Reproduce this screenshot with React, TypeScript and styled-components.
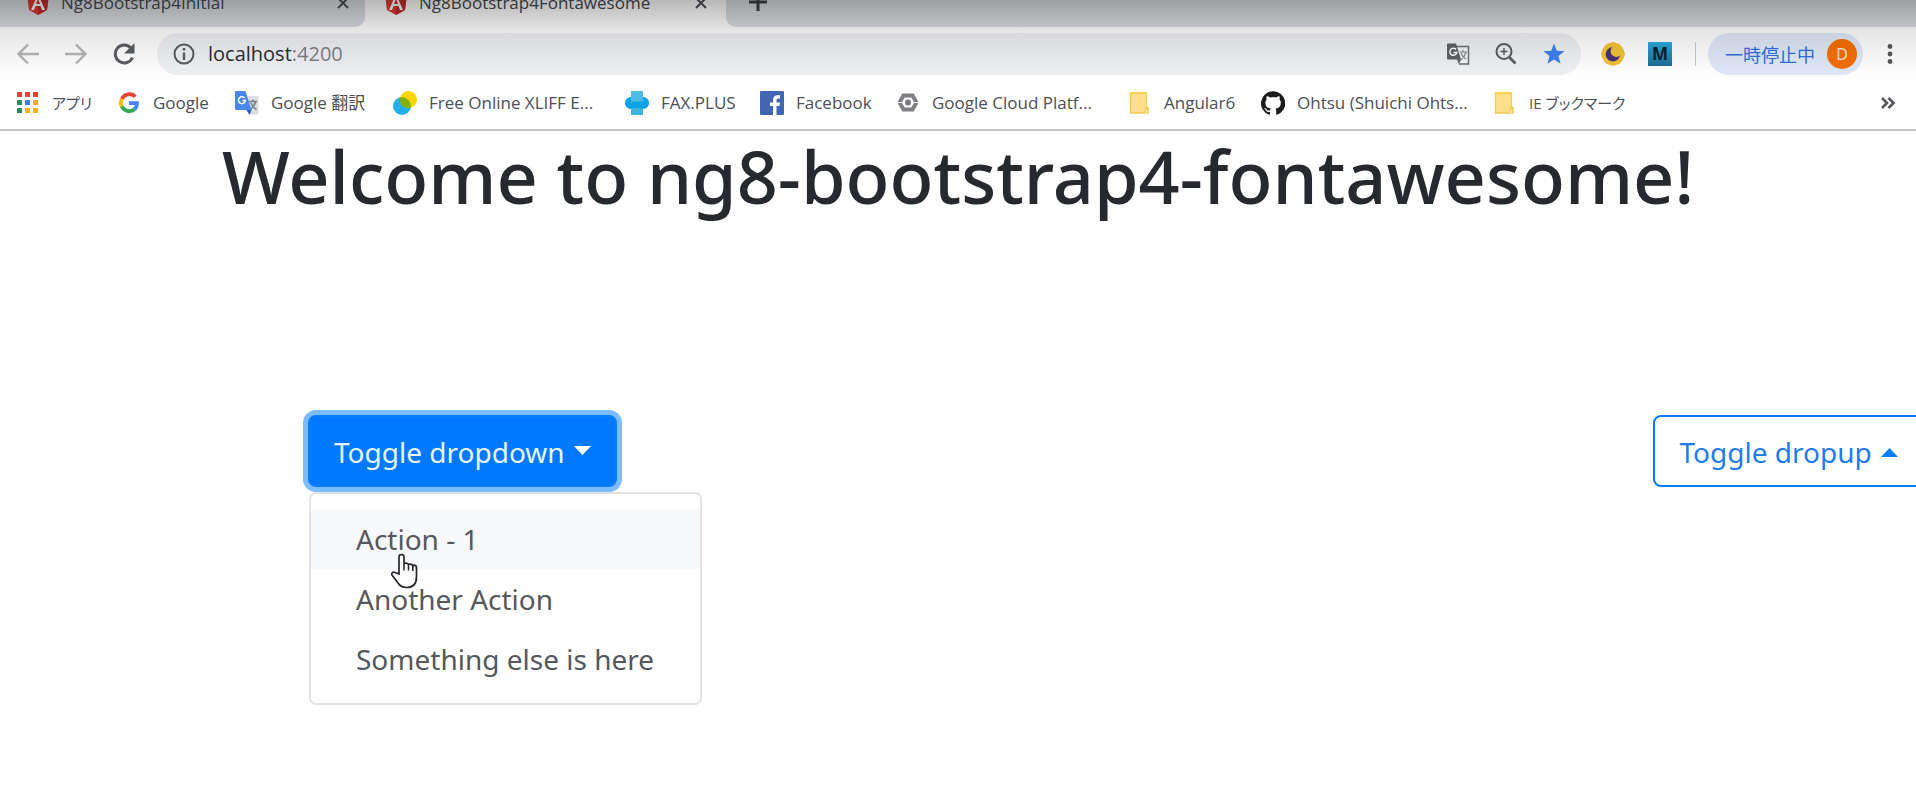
import React from "react";
import styled, { createGlobalStyle } from "styled-components";

const uiFont = `"Open Sans", "Noto Sans CJK JP", sans-serif`;
const pageFont = `"Noto Sans", "Noto Sans CJK JP", sans-serif`;

const GlobalStyle = createGlobalStyle`
  *, *::before, *::after { box-sizing: border-box; }
  body { margin: 0; background: #fff; font-family: ${pageFont}; }
  button { font-family: inherit; }
`;

const Page = styled.div`
  min-height: 100vh;
  overflow-x: clip;
`;

const Chrome = styled.header`
  position: relative;
  font-family: ${uiFont};
  border-bottom: 2px solid #c4c4c4;
`;

const Shade = styled.div`
  position: absolute;
  inset: 0 0 auto 0;
  height: 84px;
  background: linear-gradient(rgba(0, 0, 0, 0.28), rgba(0, 0, 0, 0.1) 36%, rgba(0, 0, 0, 0.01) 85%, transparent);
  pointer-events: none;
`;

const TabStrip = styled.div`
  display: flex;
  height: 27px;
  overflow: hidden;
  background: #fff;
`;

const Tab = styled.div<{ $active?: boolean; $width: number }>`
  flex: 0 0 ${(p) => p.$width}px;
  display: flex;
  align-items: flex-end;
  padding: 0 ${(p) => (p.$active ? 18 : 15)}px 0 ${(p) => (p.$active ? 20 : 27)}px;
  background: ${(p) => (p.$active ? "#fff" : "#dadce1")};
  border-bottom-right-radius: ${(p) => (p.$active ? 0 : 10)}px;
`;

const TabInner = styled.div`
  flex: 1;
  display: flex;
  align-items: center;
  gap: 12px;
  height: 48px;
  font-size: 17px;
  line-height: 24px;
  color: #45484d;
`;

const TabTitle = styled.span`
  flex: 1;
  white-space: nowrap;
`;

const PlainButton = styled.button`
  display: flex;
  align-items: center;
  justify-content: center;
  padding: 0;
  border: 0;
  background: none;
  color: #5a5d61;
`;

const StripRest = styled.div`
  flex: 1;
  display: flex;
  align-items: flex-end;
  padding-left: 22px;
  background: #dadce1;
  border-bottom-left-radius: 10px;
`;

const NewTab = styled(PlainButton)`
  height: 50px;
`;

const Toolbar = styled.div`
  display: flex;
  align-items: center;
  height: 54px;
  padding: 0 23px 0 16px;
`;

const NavGroup = styled.div`
  display: flex;
  gap: 24px;
  margin-right: 21px;
`;

const Omnibox = styled.div`
  flex: 1;
  display: flex;
  align-items: center;
  gap: 24px;
  height: 42px;
  padding: 0 15px;
  border-radius: 21px;
  background: #eff0f4;
`;

const Address = styled.div`
  flex: 1;
  display: flex;
  align-items: center;
  gap: 12px;
  font-size: 20px;
  line-height: 26px;
  color: #2b2d31;
`;

const Port = styled.span`
  color: #7c8086;
`;

const Extensions = styled.div`
  display: flex;
  align-items: center;
  gap: 23px;
  margin: 0 12px 0 20px;
`;

const Divider = styled.span`
  width: 1px;
  height: 24px;
  background: #c6c8cc;
`;

const Profile = styled.button`
  display: flex;
  align-items: center;
  gap: 12px;
  height: 42px;
  padding: 0 6px 0 17px;
  margin-right: 24px;
  border: 0;
  border-radius: 21px;
  background: #dfe8f8;
  color: #2f6fe0;
  font-family: ${uiFont};
  font-size: 18px;
`;

const Avatar = styled.span`
  display: flex;
  align-items: center;
  justify-content: center;
  width: 30px;
  height: 30px;
  border-radius: 50%;
  background: #f57000;
  color: #fbe9d8;
  font-size: 16px;
`;

const Bookmarks = styled.nav`
  display: flex;
  align-items: center;
  height: 48px;
  padding: 0 20px 5px 16px;
`;

const BookmarkLink = styled.a<{ $width: number; $kana?: boolean }>`
  flex: 0 1 ${(p) => p.$width}px;
  display: flex;
  align-items: center;
  gap: 12px;
  color: #4d5055;
  font-size: ${(p) => (p.$kana ? 15 : 17)}px;
  line-height: 24px;
  font-feature-settings: "palt";
  text-decoration: none;
  white-space: nowrap;
`;

const Overflow = styled(PlainButton)`
  margin-left: auto;
`;

const Icon = styled.svg`
  display: block;
  flex: none;
`;

const Title = styled.h1`
  margin: 0;
  text-align: center;
  color: #26292e;
  font-size: 72px;
  line-height: 90px;
  font-weight: 500;
  white-space: nowrap;
`;

const Row = styled.section`
  display: grid;
  grid-template-columns: minmax(0, 41fr) minmax(0, 8fr);
  margin-top: 194px;
  padding-left: 308px;
`;

const Dropdown = styled.div`
  position: relative;
`;

const ToggleButton = styled.button<{ $outline?: boolean }>`
  display: flex;
  align-items: center;
  gap: 9px;
  height: 72px;
  padding: 2px 24px 0;
  border: 2px solid #0a7cff;
  border-radius: 8px;
  background: ${(p) => (p.$outline ? "#fff" : "#0079ff")};
  color: ${(p) => (p.$outline ? "#1f7cf0" : "#e8f4ff")};
  box-shadow: ${(p) => (p.$outline ? "none" : "0 0 0 5px #7dbcff")};
  font-size: 28px;
  line-height: 40px;
  white-space: nowrap;
`;

const Menu = styled.ul`
  position: absolute;
  top: 77px;
  left: 1px;
  width: 393px;
  margin: 0;
  padding: 15px 0 14px;
  list-style: none;
  background: #fff;
  border: 2px solid #e3e3e6;
  border-radius: 7px;
`;

const MenuLink = styled.a<{ $hover?: boolean }>`
  display: block;
  padding: 10px 45px;
  color: #55585c;
  background: ${(p) => (p.$hover ? "#f8f9fc" : "transparent")};
  font-size: 28px;
  line-height: 40px;
  text-decoration: none;
  white-space: nowrap;
`;

const Pointer = styled.svg`
  position: absolute;
  top: 138px;
  left: 82px;
`;

const AngularIcon = () => (
  <Icon width="22" height="24" viewBox="0 0 22 24">
    <path d="M11 0 22 4l-2 15-9 5-9-5L0 4z" fill="#dd3a30" />
    <path d="M11 0v24l9-5 2-15z" fill="#c02c2b" />
    <path d="M11 3 4 19h3l1.500-4h5l1.500 4h3zM11 8l2 5H9z" fill="#fff" fillRule="evenodd" />
  </Icon>
);

const CloseIcon = () => (
  <Icon width="14" height="14" viewBox="0 0 14 14" stroke="#4c4f53" strokeWidth="2">
    <path d="M2 2l10 10M12 2L2 12" />
  </Icon>
);

const ArrowIcon = ({ forward }: { forward?: boolean }) => (
  <Icon width="24" height="24" viewBox="0 0 24 24" fill="none" stroke="#b4b5b7" strokeWidth="2.400">
    <path d={forward ? "M1 12h20M12 2.500l9.500 9.500-9.500 9.500" : "M23 12H3M12 2.500L2.500 12l9.500 9.500"} />
  </Icon>
);

const ReloadIcon = () => (
  <Icon width="24" height="24" viewBox="0 0 24 24">
    <path d="M20.500 15.500A9 9 0 1 1 19 6" fill="none" stroke="#5a5d61" strokeWidth="3" />
    <path d="M22.500 1v10.500H12z" fill="#5a5d61" />
  </Icon>
);

const InfoIcon = () => (
  <Icon width="24" height="24" viewBox="0 0 24 24">
    <circle cx="12" cy="12" r="9.500" fill="none" stroke="#5a5d61" strokeWidth="2" />
    <path d="M10.800 10.500h2.400V18h-2.400zM10.800 6h2.400v2.500h-2.400z" fill="#5a5d61" />
  </Icon>
);

const PageTranslateIcon = () => (
  <Icon width="24" height="24" viewBox="0 0 24 24">
    <path d="M9 4.500h13.500V22H13" fill="#f2f3f5" stroke="#6a6d71" strokeWidth="1.500" />
    <path d="M2 1.500h8l5 16-2 4.500-2-4.500H2a1 1 0 0 1-1-1v-14a1 1 0 0 1 1-1z" fill="#5d6064" />
    <path d="M10 7.500a3.500 3.500 0 1 0 .8 3H7.500" fill="none" stroke="#fff" strokeWidth="1.400" />
    <path d="M13.500 10H21M17 8v2M20 10c-1 4-3 6-5 8M15 11c1 3 3 5 5 6" fill="none" stroke="#85888c" strokeWidth="1.200" />
  </Icon>
);

const ZoomIcon = () => (
  <Icon width="24" height="24" viewBox="0 0 24 24" fill="none" stroke="#5a5d61" strokeWidth="2">
    <circle cx="10" cy="9.500" r="7.500" />
    <path d="M15.500 15.500l6 6" strokeWidth="2.800" />
    <path d="M10 6v7M6.500 9.500h7" strokeWidth="1.500" />
  </Icon>
);

const StarIcon = () => (
  <Icon width="24" height="24" viewBox="0 0 24 24">
    <path d="M12 1.500l2.800 7.200 7.700.5-6 4.900 2 7.600-6.500-4.200-6.500 4.200 2-7.600-6-4.900 7.700-.5z" fill="#3f80f2" />
  </Icon>
);

const MoonIcon = () => (
  <Icon width="24" height="24" viewBox="0 0 24 24">
    <path d="M12 0l3 1 3.500 1 2.500 3 2 3.500L24 12l-1 3.500-2 3.500-2.500 3-3.500 1-3 1-3-1-3.500-1L3 19l-2-3.500L0 12l1-3.500L3 5l2.500-3L9 1z" fill="#f2c335" />
    <path d="M11.500 5a7.200 7.200 0 1 0 7.500 8.500A5.500 5.500 0 0 1 11.500 5z" fill="#46307c" />
  </Icon>
);

const MarkLogo = styled.span`
  display: flex;
  align-items: center;
  justify-content: center;
  width: 24px;
  height: 24px;
  background: linear-gradient(#29abe2, #1d6e94);
  color: #08212f;
  font-size: 17px;
  line-height: 24px;
  font-weight: 700;
`;

const MoreIcon = () => (
  <Icon width="6" height="24" viewBox="0 0 6 24" fill="#55585c">
    <circle cx="3" cy="4.500" r="2.400" />
    <circle cx="3" cy="12" r="2.400" />
    <circle cx="3" cy="19.500" r="2.400" />
  </Icon>
);

const appColors = ["#ea4335", "#ea4335", "#ea4335", "#2f8f5b", "#3a7de0", "#f0a92b", "#2f8f5b", "#f5b21a", "#f5b21a"];

const AppsIcon = () => (
  <Icon width="24" height="24" viewBox="0 0 24 24">
    {appColors.map((c, i) => (
      <rect key={i} x={1 + (i % 3) * 8} y={1 + Math.floor(i / 3) * 8} width="5" height="5" fill={c} />
    ))}
  </Icon>
);

const GoogleIcon = () => (
  <Icon width="24" height="24" viewBox="0 0 24 24" fill="none" strokeWidth="3.800">
    <path d="M18.300 5.800A8.300 8.300 0 0 0 4.800 7.800" stroke="#ea4335" />
    <path d="M4.800 7.800a8.300 8.300 0 0 0 0 7.700" stroke="#fbbc05" />
    <path d="M4.800 15.500a8.300 8.300 0 0 0 12.700 2.800" stroke="#34a853" />
    <path d="M17.500 18.300a8 8 0 0 0 2.500-6.200h-8" stroke="#4285f4" />
  </Icon>
);

const TranslateIcon = () => (
  <Icon width="24" height="24" viewBox="0 0 24 24">
    <path d="M9 5h14.500v18.500H15z" fill="#dcdee1" />
    <path d="M14 10.500h8M18 8.500v2M20.500 11c-1 4-3 6-5.500 8M16 12c1 3 3 5 5.500 6.500" fill="none" stroke="#6f8188" strokeWidth="1.500" />
    <path d="M1 0h9.500l6 19H1.500A1.500 1.500 0 0 1 0 17.500V1a1 1 0 0 1 1-1z" fill="#4a86ee" />
    <path d="M16.500 19l-2 5-3-5z" fill="#2b58c0" />
    <path d="M9.500 7a3.400 3.400 0 1 0 .8 2.600H7.500" fill="none" stroke="#fff" strokeWidth="1.500" />
  </Icon>
);

const XliffIcon = () => (
  <Icon width="24" height="24" viewBox="0 0 24 24">
    <circle cx="9" cy="15" r="9" fill="#22aee8" />
    <circle cx="15.500" cy="8.500" r="8.500" fill="#fdd600" />
    <path d="M7.200 6.200A9 9 0 0 1 17.800 16.700 8.500 8.500 0 0 1 7.200 6.200z" fill="#85b010" />
  </Icon>
);

const FaxIcon = () => (
  <Icon width="24" height="24" viewBox="0 0 24 24">
    <path d="M6 6h12c3 0 6 2.500 6 6s-3 6-6 6H6c-3 0-6-2.500-6-6s3-6 6-6z" fill="#0aa3e6" />
    <path d="M6 0h12v10.500H6z" fill="#50bce6" />
    <path d="M6 17h12v7H6z" fill="#3fb4df" />
  </Icon>
);

const FacebookIcon = () => (
  <Icon width="24" height="24" viewBox="0 0 24 24">
    <rect width="24" height="24" rx="1" fill="#4267b2" />
    <path d="M13 24v-9h-3v-3.500h3V9c0-3 1.800-4.800 4.500-4.800H20v3.300h-1.700c-1.300 0-1.800.7-1.800 1.800v2.200H20l-.5 3.500h-3v9z" fill="#fff" />
  </Icon>
);

const CloudIcon = () => (
  <Icon width="24" height="24" viewBox="0 0 24 24">
    <path d="M7.500 4.500h9l4 7-4 7h-9l-4-7z" fill="none" stroke="#7d7f82" strokeWidth="4" />
    <path d="M17.500 11.500h6M.5 11.500h6" stroke="#fff" strokeWidth="1" />
    <circle cx="12" cy="11.500" r="3" fill="#77797c" />
  </Icon>
);

const FolderIcon = () => (
  <Icon width="24" height="24" viewBox="0 0 24 24">
    <path d="M2.500 2h16v14.500h1.500V22H2.500z" fill="#ffe08a" stroke="#f3cc55" strokeWidth="1.300" />
    <path d="M2 2h17" stroke="#fbd34c" strokeWidth="2" />
    <path d="M17 22v-4.500h3V22" fill="#ffe9a8" stroke="#efc24a" />
  </Icon>
);

const GithubIcon = () => (
  <Icon width="24" height="24" viewBox="0 0 24 24">
    <path
      d="M12 .3a12 12 0 0 0-3.800 23.400c.6.1.8-.3.8-.6v-2.200c-3.300.7-4-1.400-4-1.400-.6-1.400-1.400-1.800-1.400-1.800-1-.7.1-.7.1-.7 1.200.1 1.900 1.200 1.900 1.200 1 1.800 2.800 1.300 3.500 1 .1-.8.400-1.300.8-1.600-2.700-.3-5.500-1.300-5.500-6 0-1.200.5-2.300 1.300-3.100-.2-.4-.6-1.600 0-3.200 0 0 1-.3 3.400 1.200a11.500 11.500 0 0 1 6 0c2.300-1.500 3.300-1.200 3.300-1.200.7 1.600.2 2.800.1 3.200.8.8 1.300 1.900 1.300 3.200 0 4.600-2.800 5.600-5.500 5.900.5.400.9 1.100.9 2.200v3.300c0 .3.100.7.8.6A12 12 0 0 0 12 .3"
      fill="#1b1c1e"
    />
  </Icon>
);

const Caret = ({ up }: { up?: boolean }) => (
  <Icon width="17" height="12" viewBox="0 0 17 12" fill={up ? "#0a7cff" : "#fff"}>
    <path d={up ? "M0 11L8.500 2 17 11z" : "M0 0h17L8.500 9z"} />
  </Icon>
);

const bookmarks = [
  { label: "アプリ", width: 101, kana: true, icon: <AppsIcon /> },
  { label: "Google", width: 118, icon: <GoogleIcon /> },
  { label: "Google 翻訳", width: 158, icon: <TranslateIcon /> },
  { label: "Free Online XLIFF E...", width: 232, icon: <XliffIcon /> },
  { label: "FAX.PLUS", width: 135, icon: <FaxIcon /> },
  { label: "Facebook", width: 136, icon: <FacebookIcon /> },
  { label: "Google Cloud Platf...", width: 232, icon: <CloudIcon /> },
  { label: "Angular6", width: 133, icon: <FolderIcon /> },
  { label: "Ohtsu (Shuichi Ohts...", width: 232, icon: <GithubIcon /> },
  { label: "IE ブックマーク", width: 140, kana: true, icon: <FolderIcon /> },
];

const actions = ["Action - 1", "Another Action", "Something else is here"];

export default function App() {
  return (
    <Page>
      <GlobalStyle />
      <Chrome>
        <TabStrip>
          <Tab $width={365}>
            <TabInner>
              <AngularIcon />
              <TabTitle>Ng8Bootstrap4Initial</TabTitle>
              <PlainButton aria-label="Close tab"><CloseIcon /></PlainButton>
            </TabInner>
          </Tab>
          <Tab $active $width={361}>
            <TabInner>
              <AngularIcon />
              <TabTitle>Ng8Bootstrap4Fontawesome</TabTitle>
              <PlainButton aria-label="Close tab"><CloseIcon /></PlainButton>
            </TabInner>
          </Tab>
          <StripRest>
            <NewTab aria-label="New tab">
              <Icon width="20" height="20" viewBox="0 0 20 20" stroke="#3f4246" strokeWidth="3">
                <path d="M10 1v18M1 10h18" />
              </Icon>
            </NewTab>
          </StripRest>
        </TabStrip>
        <Toolbar>
          <NavGroup>
            <PlainButton aria-label="Back"><ArrowIcon /></PlainButton>
            <PlainButton aria-label="Forward"><ArrowIcon forward /></PlainButton>
            <PlainButton aria-label="Reload"><ReloadIcon /></PlainButton>
          </NavGroup>
          <Omnibox>
            <Address>
              <InfoIcon />
              <span>localhost<Port>:4200</Port></span>
            </Address>
            <PlainButton aria-label="Translate this page"><PageTranslateIcon /></PlainButton>
            <PlainButton aria-label="Zoom"><ZoomIcon /></PlainButton>
            <PlainButton aria-label="Bookmark"><StarIcon /></PlainButton>
          </Omnibox>
          <Extensions>
            <PlainButton aria-label="Night mode"><MoonIcon /></PlainButton>
            <PlainButton><MarkLogo>M</MarkLogo></PlainButton>
            <Divider />
          </Extensions>
          <Profile>
            一時停止中
            <Avatar>D</Avatar>
          </Profile>
          <PlainButton aria-label="Menu"><MoreIcon /></PlainButton>
        </Toolbar>
        <Bookmarks>
          {bookmarks.map((b) => (
            <BookmarkLink key={b.label} href="#" $width={b.width} $kana={b.kana}>
              {b.icon}
              {b.label}
            </BookmarkLink>
          ))}
          <Overflow aria-label="More bookmarks">
            <Icon width="16" height="14" viewBox="0 0 16 14" fill="none" stroke="#55585c" strokeWidth="2.600">
              <path d="M2 2l5 5-5 5M8.500 2l5 5-5 5" />
            </Icon>
          </Overflow>
        </Bookmarks>
        <Shade />
      </Chrome>
      <main>
        <Title>Welcome to ng8-bootstrap4-fontawesome!</Title>
        <Row>
          <Dropdown>
            <ToggleButton aria-expanded="true">
              Toggle dropdown
              <Caret />
            </ToggleButton>
            <Menu>
              {actions.map((label, i) => (
                <li key={label}>
                  <MenuLink href="#" $hover={i === 0}>{label}</MenuLink>
                </li>
              ))}
            </Menu>
            <Pointer width="28" height="36" viewBox="0 0 28 36">
              <path
                d="M9 21V4a2.500 2.500 0 0 1 5 0v7.500c0-2 4-2 4.500.5 0-1.500 4-1.200 4.300 1 1-1.500 3.700-.8 3.700 1.500V24c0 7-4 10.500-10 10.500-4 0-6.500-1.500-8.500-4.500L2 22c-1-2 1-3.500 3-2.500z"
                fill="#fff"
                stroke="#26262e"
                strokeWidth="1.700"
              />
              <path d="M14 11v6.500M18.500 12v5.500M22.800 13v5" stroke="#26262e" strokeWidth="1.500" />
            </Pointer>
          </Dropdown>
          <Dropdown>
            <ToggleButton $outline aria-expanded="false">
              Toggle dropup
              <Caret up />
            </ToggleButton>
          </Dropdown>
        </Row>
      </main>
    </Page>
  );
}
